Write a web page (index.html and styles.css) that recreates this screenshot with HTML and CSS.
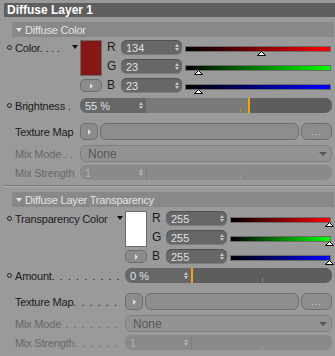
FILE: index.html
```html
<!DOCTYPE html>
<html lang="en">
<head>
    <meta charset="UTF-8">
    <meta name="viewport" content="width=device-width, initial-scale=1.0">
    <title>Diffuse Layer 1</title>
    <link rel="stylesheet" href="styles.css">
</head>
<body>
<div class="panel">
    <div class="title">Diffuse Layer 1</div>

    <div class="group color-group">
        <div class="group-head"><span class="caret"></span>Diffuse Color</div>
        <div class="color-block">
            <div class="lbl"><span class="dot"></span>Color. . . .</div>
            <div class="pick"><span></span></div>
            <div class="swatch-col">
                <div class="swatch" style="background: rgb(134, 23, 23);"></div>
                <div class="tbtn small"></div>
            </div>
            <div class="chans">
                <div class="chan">
                    <span class="chan-l">R</span>
                    <div class="num solo">134<span class="spin"></span></div>
                    <div class="track red"><svg class="knob" style="left: 52.5%;" width="9" height="5"><polygon points="4.5,0.5 8.5,4.5 0.5,4.5"/></svg></div>
                </div>
                <div class="chan">
                    <span class="chan-l">G</span>
                    <div class="num solo">23<span class="spin"></span></div>
                    <div class="track green"><svg class="knob" style="left: 9%;" width="9" height="5"><polygon points="4.5,0.5 8.5,4.5 0.5,4.5"/></svg></div>
                </div>
                <div class="chan">
                    <span class="chan-l">B</span>
                    <div class="num solo">23<span class="spin"></span></div>
                    <div class="track blue"><svg class="knob" style="left: 9%;" width="9" height="5"><polygon points="4.5,0.5 8.5,4.5 0.5,4.5"/></svg></div>
                </div>
            </div>
        </div>
        <div class="row amount">
            <div class="lbl"><span class="dot"></span>Brightness .</div>
            <div class="combo">
                <div class="num">55 %<span class="spin"></span></div>
                <div class="slider"><div class="fill" style="width: 55%;"></div><span class="tick"></span></div>
            </div>
        </div>
        <div class="row tall texture">
            <div class="lbl plain">Texture Map</div>
            <div class="tbtn"></div>
            <div class="tfield"></div>
            <div class="more">...</div>
        </div>
        <div class="row tall off">
            <div class="lbl plain">Mix Mode . .</div>
            <div class="select">None<span class="arrow"></span></div>
        </div>
        <div class="row strength off">
            <div class="lbl plain">Mix Strength</div>
            <div class="combo">
                <div class="num">1<span class="spin"></span></div>
                <div class="slider"><span class="tick"></span></div>
            </div>
        </div>
    </div>

    <div class="sep"></div>

    <div class="group trans-group">
        <div class="group-head"><span class="caret"></span>Diffuse Layer Transparency</div>
        <div class="color-block">
            <div class="lbl"><span class="dot"></span>Transparency Color</div>
            <div class="pick"><span></span></div>
            <div class="swatch-col">
                <div class="swatch" style="background: #fff;"></div>
                <div class="tbtn small"></div>
            </div>
            <div class="chans">
                <div class="chan">
                    <span class="chan-l">R</span>
                    <div class="num solo">255<span class="spin"></span></div>
                    <div class="track red"><svg class="knob" style="left: 100%;" width="9" height="5"><polygon points="4.5,0.5 8.5,4.5 0.5,4.5"/></svg></div>
                </div>
                <div class="chan">
                    <span class="chan-l">G</span>
                    <div class="num solo">255<span class="spin"></span></div>
                    <div class="track green"><svg class="knob" style="left: 100%;" width="9" height="5"><polygon points="4.5,0.5 8.5,4.5 0.5,4.5"/></svg></div>
                </div>
                <div class="chan">
                    <span class="chan-l">B</span>
                    <div class="num solo">255<span class="spin"></span></div>
                    <div class="track blue"><svg class="knob" style="left: 100%;" width="9" height="5"><polygon points="4.5,0.5 8.5,4.5 0.5,4.5"/></svg></div>
                </div>
            </div>
        </div>
        <div class="row amount">
            <div class="lbl"><span class="dot"></span>Amount<span class="lead">. . . . . . . . .</span></div>
            <div class="combo">
                <div class="num">0 %<span class="spin"></span></div>
                <div class="slider"><div class="fill" style="width: 0%;"></div><span class="tick"></span></div>
            </div>
        </div>
        <div class="row tall texture">
            <div class="lbl plain">Texture Map<span class="lead">. . . . . .</span></div>
            <div class="tbtn"></div>
            <div class="tfield"></div>
            <div class="more">...</div>
        </div>
        <div class="row tall off">
            <div class="lbl plain">Mix Mode<span class="lead"> . . . . . . .</span></div>
            <div class="select">None<span class="arrow"></span></div>
        </div>
        <div class="row strength off">
            <div class="lbl plain">Mix Strength<span class="lead">. . . . . .</span></div>
            <div class="combo">
                <div class="num">1<span class="spin"></span></div>
                <div class="slider"><span class="tick"></span></div>
            </div>
        </div>
    </div>
</div>
</body>
</html>
```

FILE: styles.css
```css
:root {
    --bg: #9a9a9a;
    --head: #5e5e5e;
    --subhead: #888;
    --field: #676767;
    --field-text: #dfe0e8;
    --label: #1b1b1b;
    --label-off: #686868;
}
body {
    margin: 0;
    background: var(--bg);
    font-family: "Liberation Sans", Arial, sans-serif;
    font-size: 11px;
    color: var(--label);
}
.panel {
    padding: 3px 0 0 4px;
    width: 331px;
}
.title {
    height: 14px;
    line-height: 14px;
    padding-left: 3px;
    background: var(--head);
    color: #fff;
    font-weight: bold;
    font-size: 12px;
}
.color-group { --lw: 76px; }
.trans-group { --lw: 121px; }
.group-head {
    display: flex;
    align-items: center;
    height: 15px;
    margin: 5px 1px 0 8px;
    padding-left: 4px;
    background: var(--subhead);
    color: #e4e4e4;
    letter-spacing: -0.2px;
}
.caret {
    width: 0;
    height: 0;
    border-left: 3px solid transparent;
    border-right: 3px solid transparent;
    border-top: 4px solid #e4e4e4;
    margin-right: 3px;
}
.lbl {
    display: flex;
    align-items: center;
    width: var(--lw);
    flex-shrink: 0;
    box-sizing: border-box;
    padding-left: 3px;
    white-space: nowrap;
    letter-spacing: -0.2px;
}
.lbl.plain { padding-left: 11px; }
.lead {
    letter-spacing: 1px;
    white-space: pre;
}
.dot {
    width: 5px;
    height: 5px;
    box-sizing: border-box;
    border: 1px solid #222;
    border-radius: 50%;
    margin-right: 3px;
    flex-shrink: 0;
}
.off .lbl { color: var(--label-off); }

/* colour picker block */
.color-block {
    display: flex;
    margin-top: 3px;
    padding-right: 3px;
}
.trans-group .color-block { margin-top: 4px; }
.color-block .lbl {
    width: calc(var(--lw) - 10px);
    height: 15px;
}
.pick {
    width: 10px;
    flex-shrink: 0;
}
.pick span {
    display: block;
    width: 0;
    height: 0;
    margin: 5px 0 0 2px;
    border-left: 3.5px solid transparent;
    border-right: 3.5px solid transparent;
    border-top: 4px solid #111;
}
.swatch-col {
    width: 22px;
    flex-shrink: 0;
}
.swatch {
    height: 36px;
    box-sizing: border-box;
    border: 1px solid #6a6a6a;
}
.chans {
    flex: 1;
    margin-left: 5px;
}
.chan {
    display: flex;
    height: 15px;
    margin-bottom: 4px;
}
.chan:last-child { margin-bottom: 0; }
.chan-l {
    width: 14px;
    font-size: 12px;
    line-height: 15px;
}
.num {
    display: flex;
    align-items: center;
    justify-content: space-between;
    box-sizing: border-box;
    width: 66px;
    height: 15px;
    padding: 0 3px 0 5px;
    background: var(--field);
    color: var(--field-text);
    flex-shrink: 0;
}
.num.solo {
    width: 61px;
    border-radius: 6px;
    box-shadow: inset 0 1px 0 #515151, inset 0 -1px 0 #7c7c7c;
}
.spin {
    display: flex;
    flex-direction: column;
    align-items: center;
    gap: 1px;
}
.spin::before, .spin::after {
    content: "";
    width: 0;
    height: 0;
    border-left: 2.5px solid transparent;
    border-right: 2.5px solid transparent;
}
.spin::before { border-bottom: 3px solid #c8c8c8; }
.spin::after { border-top: 3px solid #c8c8c8; }
.track {
    position: relative;
    flex: 1;
    height: 4px;
    margin: 6px 1px 0 3px;
    border: 1px solid #6c6c6c;
}
.track.red { background: linear-gradient(to right, #000, #f00); }
.track.green { background: linear-gradient(to right, #000, #0f0); }
.track.blue { background: linear-gradient(to right, #000, #00f); }
.knob {
    position: absolute;
    top: 4px;
    margin-left: -5px;
    display: block;
}
.knob polygon {
    fill: #fff;
    stroke: #000;
    stroke-width: 1;
}

/* generic rows */
.row {
    display: flex;
    align-items: center;
    height: 15px;
    margin-top: 5px;
    padding-right: 3px;
}
.trans-group .row.amount { margin-top: 4px; }
.row.tall { height: 17px; }
.row.texture { margin-top: 10px; }
.row.strength { margin-top: 3px; }
.combo {
    display: flex;
    flex: 1;
    height: 15px;
    border-radius: 7px;
    overflow: hidden;
    box-shadow: inset 0 1px 0 #515151;
}
.slider {
    position: relative;
    flex: 1;
    background: #5d5d5d;
    border-left: 1px solid #858585;
}
.fill {
    box-sizing: content-box;
    height: 100%;
    background: #7a7a7a;
    border-right: 2px solid #f5a300;
    margin-left: -1px;
}
.tick {
    position: absolute;
    left: 50%;
    bottom: 1px;
    width: 1px;
    height: 4px;
    background: #c08a22;
}
.off .num {
    background: #8a8a8a;
    color: #b1b1b1;
}
.off .spin::before { border-bottom-color: #b4b4b4; }
.off .spin::after { border-top-color: #b4b4b4; }
.off .combo { box-shadow: inset 0 1px 0 #7a7a7a, inset 0 -1px 0 #9a9a9a; }
.off .slider {
    background: #8a8a8a;
    border-left-color: #7c7c7c;
}
.off .tick { background: #9c9c9c; }

.tbtn {
    position: relative;
    box-sizing: border-box;
    width: 18px;
    height: 17px;
    border: 1px solid #6e6e6e;
    border-radius: 5px;
    background: #8c8c8c;
    flex-shrink: 0;
}
.tbtn::after {
    content: "";
    position: absolute;
    left: 50%;
    top: 50%;
    margin: -3px 0 0 -1px;
    border-top: 3px solid transparent;
    border-bottom: 3px solid transparent;
    border-left: 3px solid #dcdcdc;
}
.tbtn.small {
    width: 22px;
    height: 13px;
    margin-top: 3px;
}
.tfield {
    flex: 1;
    box-sizing: border-box;
    height: 17px;
    margin-left: 2px;
    border: 1px solid #6e6e6e;
    border-radius: 6px;
    background: #8d8d8d;
}
.more {
    box-sizing: border-box;
    width: 31px;
    height: 17px;
    margin-left: 2px;
    border: 1px solid #6e6e6e;
    border-radius: 6px;
    background: #8d8d8d;
    color: #d0d0d0;
    font-size: 9px;
    line-height: 16px;
    text-align: center;
    letter-spacing: 1px;
}
.select {
    display: flex;
    align-items: center;
    justify-content: space-between;
    flex: 1;
    box-sizing: border-box;
    height: 17px;
    padding: 0 4px 0 7px;
    border: 1px solid #7e7e7e;
    border-radius: 6px;
    background: #939393;
    color: #585858;
    font-size: 12px;
}
.arrow {
    width: 0;
    height: 0;
    border-left: 4px solid transparent;
    border-right: 4px solid transparent;
    border-top: 4px solid #575757;
}
.sep {
    margin: 5px 0 0 -1px;
    border-top: 1px solid #757575;
    border-bottom: 1px solid #b2b2b2;
}
```
